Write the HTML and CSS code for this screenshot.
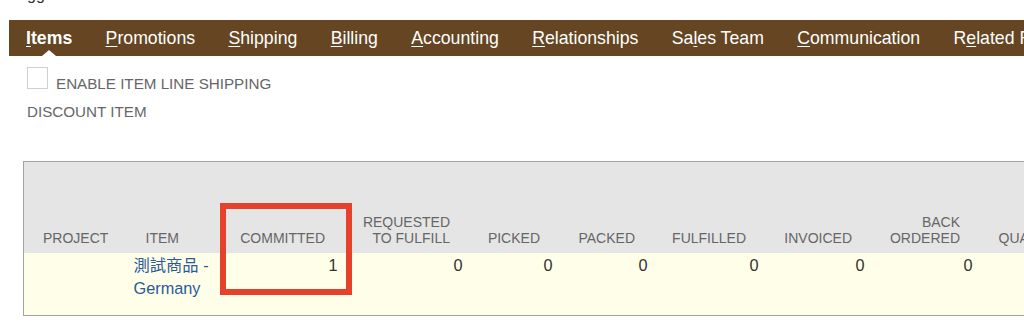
FILE: index.html
```html
<!DOCTYPE html>
<html lang="en">
<head>
  <meta charset="UTF-8" />
  <title>Sales Order - Items</title>
  <link rel="stylesheet" href="styles.css">
</head>
<body>

  <div class="page-top"><span>gg</span></div>

  <nav class="subtabs">
    <a class="tab active" href="#"><u>I</u>tems</a>
    <a class="tab" href="#"><u>P</u>romotions</a>
    <a class="tab" href="#"><u>S</u>hipping</a>
    <a class="tab" href="#"><u>B</u>illing</a>
    <a class="tab" href="#"><u>A</u>ccounting</a>
    <a class="tab" href="#"><u>R</u>elationships</a>
    <a class="tab" href="#">Sa<u>l</u>es Team</a>
    <a class="tab" href="#"><u>C</u>ommunication</a>
    <a class="tab" href="#">R<u>e</u>lated Records</a>
  </nav>

  <div class="field-row">
    <span class="checkbox"></span>
    <span class="field-label">ENABLE ITEM LINE SHIPPING</span>
  </div>
  <div class="field-label discount">DISCOUNT ITEM</div>

  <div class="grid-wrap">
    <table class="item-grid">
      <colgroup>
        <col style="width: 105px">
        <col style="width: 89px">
        <col style="width: 125px">
        <col style="width: 125px">
        <col style="width: 90px">
        <col style="width: 95px">
        <col style="width: 111px">
        <col style="width: 106px">
        <col style="width: 108px">
        <col style="width: 120px">
      </colgroup>
      <thead>
        <tr>
          <th class="first">PROJECT</th>
          <th>ITEM</th>
          <th class="num">COMMITTED</th>
          <th class="num">REQUESTED<br>TO FULFILL</th>
          <th class="num">PICKED</th>
          <th class="num">PACKED</th>
          <th class="num">FULFILLED</th>
          <th class="num">INVOICED</th>
          <th class="num">BACK<br>ORDERED</th>
          <th class="last">QUANTITY</th>
        </tr>
      </thead>
      <tbody>
        <tr>
          <td></td>
          <td><a class="item-link" href="#">測試商品 - Germany</a></td>
          <td class="num">1</td>
          <td class="num">0</td>
          <td class="num">0</td>
          <td class="num">0</td>
          <td class="num">0</td>
          <td class="num">0</td>
          <td class="num">0</td>
          <td></td>
        </tr>
      </tbody>
    </table>
    <div class="highlight"></div>
  </div>

</body>
</html>
```

FILE: styles.css
```css
body {
  margin: 0;
  padding-left: 9px;
  background: #fff;
  font-family: "Liberation Sans", Arial, "Noto Sans CJK TC", sans-serif;
  overflow: hidden;
}

/* cut-off line above the tabs */
.page-top {
  height: 4px;
  overflow: hidden;
  padding-left: 18px;
}

.page-top span {
  display: block;
  font-size: 16px;
  line-height: 16px;
  margin-top: -13px;
  color: #333;
}

/* Subtab bar */
.subtabs {
  display: flex;
  height: 36px;
  margin-top: 16px;
  background: #654522;
  white-space: nowrap;
}

.tab {
  position: relative;
  display: flex;
  align-items: center;
  padding: 0 16.7px;
  color: #fff;
  text-decoration: none;
  font-size: 17.7px;
}

.tab:first-child {
  padding-left: 17px;
}

.tab u {
  text-decoration-thickness: 1px;
  text-underline-offset: 2px;
}

.tab.active {
  font-weight: bold;
}

.tab.active::after {
  content: "";
  position: absolute;
  bottom: 0;
  left: 50%;
  margin-left: -7px;
  border-left: 7px solid transparent;
  border-right: 7px solid transparent;
  border-bottom: 6px solid #fff;
}

/* Fields */
.field-row {
  display: flex;
  align-items: baseline;
  gap: 8px;
  margin: 11px 0 0 18px;
}

.checkbox {
  width: 19px;
  height: 20px;
  border: 1px solid #cfcfcf;
  background: #fff;
}

.field-label {
  font-size: 15.2px;
  line-height: 18px;
  color: #666;
}

.discount {
  margin: 10px 0 0 18px;
}

/* Item sublist */
.grid-wrap {
  position: relative;
  margin: 40px 0 0 14px;
}

.item-grid {
  table-layout: fixed;
  border-collapse: collapse;
  border: 1px solid #a2a2a2;
  width: 1074px;
}

.item-grid thead tr {
  height: 91px;
  background: #e5e5e5;
}

.item-grid th {
  vertical-align: bottom;
  padding: 0 17px 7px 17px;
  font-size: 14px;
  line-height: 16px;
  font-weight: normal;
  color: #666;
  text-align: left;
  white-space: nowrap;
}

.item-grid th.first {
  padding-left: 19px;
}

.item-grid th.num {
  text-align: right;
  padding-right: 17.5px;
}

.item-grid th.last {
  padding-left: 21px;
}

.item-grid tbody tr {
  height: 63px;
  background: #fffee8;
}

.item-grid td {
  vertical-align: top;
  padding: 1px 5px 0 5px;
  font-size: 16.3px;
  line-height: 23px;
  color: #333;
}

.item-grid td.num {
  text-align: right;
}

.item-link {
  color: #2a5a9c;
  text-decoration: none;
}

/* red annotation box around COMMITTED */
.highlight {
  position: absolute;
  left: 197px;
  top: 42px;
  width: 120px;
  height: 80px;
  border: 6.5px solid #e6412b;
}
```
